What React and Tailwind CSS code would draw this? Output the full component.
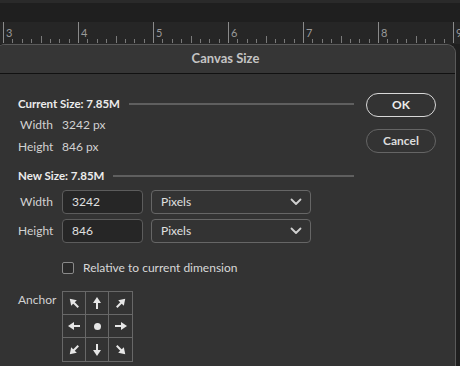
import React from "react";

const font = { fontFamily: "Lato, 'Noto Sans', sans-serif" };

function Ruler() {
  const majors = [3, 78, 153, 228, 303, 378, 453];
  const labels = ["3", "4", "5", "6", "7", "8", "9"];
  const ticks = [];
  majors.forEach((m, i) => {
    ticks.push(<line key={"M" + i} x1={m + 0.5} y1={0} x2={m + 0.5} y2={21} stroke="#8a8a8a" strokeWidth="1" />);
    for (let k = 1; k < 8; k++) {
      const x = Math.round(m + (75 * k) / 8) + 0.5;
      const top = k === 4 ? 14 : 17;
      ticks.push(<line key={"m" + i + k} x1={x} y1={top} x2={x} y2={21} stroke="#7a7a7a" strokeWidth="1" />);
    }
  });
  return (
    <svg width="460" height="22" className="block">
      <rect width="460" height="22" fill="#262626" />
      {ticks}
      {majors.map((m, i) => (
        <text key={"t" + i} x={m + 3} y={15} fill="#9a9a9a" fontSize="11" fontFamily="Lato, sans-serif">
          {labels[i]}
        </text>
      ))}
    </svg>
  );
}

function Arrow({ angle }) {
  return (
    <svg width="14" height="14" viewBox="-7 -7 14 14" style={{ transform: `rotate(${angle}deg)` }}>
      <line x1="0" y1="6" x2="0" y2="-1" stroke="#e6e6e6" strokeWidth="2" />
      <polygon points="0,-6 -4,0 4,0" fill="#e6e6e6" />
    </svg>
  );
}

function Anchor() {
  const angles = [-45, 0, 45, -90, null, 90, -135, 180, 135];
  return (
    <div className="grid grid-cols-[23px_23px_23px] grid-rows-[23px_23px_23px] border border-[#686868] w-[71px] h-[71px]">
      {angles.map((a, i) => (
        <div
          key={i}
          className={
            "flex items-center justify-center border-[#686868] " +
            (i % 3 !== 2 ? "border-r " : "") +
            (i < 6 ? "border-b" : "")
          }
        >
          {a === null ? <div className="w-[7px] h-[7px] rounded-full bg-[#e6e6e6]" /> : <Arrow angle={a} />}
        </div>
      ))}
    </div>
  );
}

function Chevron() {
  return (
    <svg width="14" height="14" viewBox="0 0 14 14">
      <polyline points="2.5,4.5 7,9 11.5,4.5" fill="none" stroke="#d0d0d0" strokeWidth="1.8" strokeLinecap="round" strokeLinejoin="round" />
    </svg>
  );
}

function InputRow({ label, value }) {
  return (
    <div className="flex items-center h-[24px]">
      <div className="w-[35px] text-right text-[12px] text-[#d2d2d2]">{label}</div>
      <div className="ml-[9px] w-[81px] h-[24px] rounded-[4px] border border-[#5c5c5c] bg-[#262626] flex items-center pl-[9px] text-[12px] text-[#e0e0e0]">
        {value}
      </div>
      <div className="ml-[8px] w-[160px] h-[24px] rounded-[4px] border border-[#666] bg-[#333333] flex items-center justify-between pl-[9px] pr-[7px] text-[12px] text-[#e0e0e0]">
        <span>Pixels</span>
        <Chevron />
      </div>
    </div>
  );
}

function Header({ text }) {
  return (
    <div className="flex items-center h-[16px]">
      <span className="text-[11.5px] font-bold text-[#ececec] whitespace-nowrap">{text}</span>
      <div className="flex-1 ml-[9px] h-[2px] bg-[#5f5f5f]" />
    </div>
  );
}

export default function App() {
  return (
    <div className="w-[460px] h-[366px] bg-[#1f1f1f] overflow-hidden flex flex-col" style={font}>
      <div className="h-[3px] bg-[#2a2a2a]" />
      <div className="h-[19px] bg-[#1f1f1f]" />
      <Ruler />
      <div className="ml-[-4px] w-[460px] flex-1 rounded-t-[9px] border-t border-r border-[#5a5a5a] bg-[#333333] flex flex-col">
        <div className="h-[29px] flex items-center justify-center text-[13px] font-bold text-[#c4c4c4] bg-[#363636] rounded-t-[9px] border-b border-[#111]">
          Canvas Size
        </div>
        <div className="flex pl-[22px] pt-[22px]">
          <div className="w-[336px] flex flex-col">
            <Header text="Current Size: 7.85M" />
            <div className="flex flex-col mt-[6px] gap-[8px] text-[12px] text-[#d2d2d2]">
              <div className="flex h-[14px] items-center">
                <div className="w-[35px] text-right">Width</div>
                <div className="ml-[9px]">3242 px</div>
              </div>
              <div className="flex h-[14px] items-center">
                <div className="w-[35px] text-right">Height</div>
                <div className="ml-[9px]">846 px</div>
              </div>
            </div>
            <div className="mt-[14px]">
              <Header text="New Size: 7.85M" />
            </div>
            <div className="flex flex-col gap-[5px] mt-[6px]">
              <InputRow label="Width" value="3242" />
              <InputRow label="Height" value="846" />
            </div>
            <div className="flex items-center mt-[18px] ml-[44px] h-[14px]">
              <div className="w-[12px] h-[12px] rounded-[2px] border border-[#8a8a8a] bg-[#2a2a2a]" />
              <span className="ml-[9px] text-[12px] text-[#d8d8d8]">Relative to current dimension</span>
            </div>
            <div className="flex mt-[16px]">
              <div className="w-[35px] text-[12px] text-[#d2d2d2]">Anchor</div>
              <div className="ml-[9px]">
                <Anchor />
              </div>
            </div>
          </div>
          <div className="flex flex-col ml-[12px] mt-[-3px] gap-[12px]">
            <div className="w-[70px] h-[24px] rounded-full border-[1.5px] border-[#d8d8d8] flex items-center justify-center text-[12px] font-bold text-[#ececec]">
              OK
            </div>
            <div className="w-[70px] h-[24px] rounded-full border border-[#656565] flex items-center justify-center text-[12px] font-bold text-[#dcdcdc]">
              Cancel
            </div>
          </div>
        </div>
      </div>
    </div>
  );
}
